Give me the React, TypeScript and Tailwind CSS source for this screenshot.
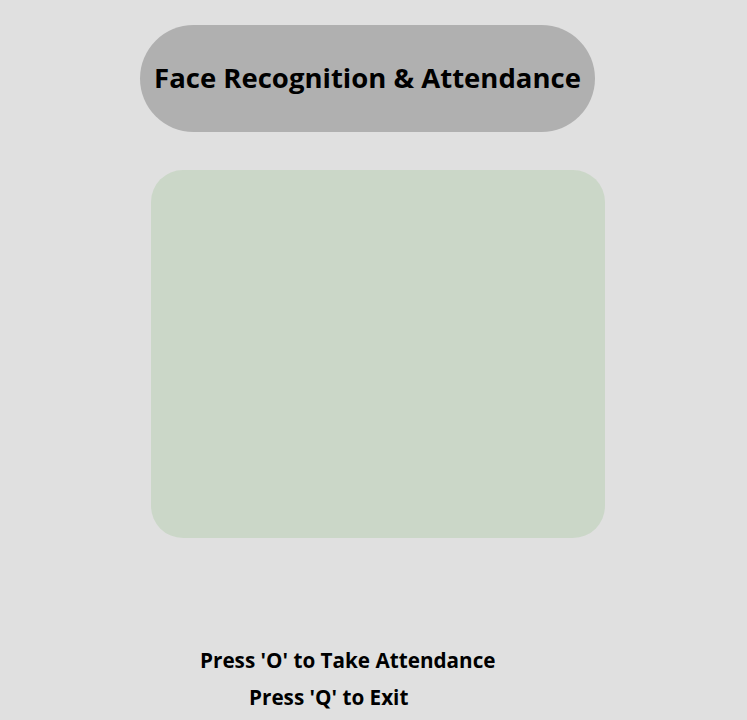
export default function App() {
    return (
        <div className="min-h-[720px] w-full bg-[#e0e0e0] flex flex-col" style={{ fontFamily: '"Open Sans", "Liberation Sans", sans-serif' }}>
            <div className="ml-[140px] mt-[25px] w-[455px] h-[107px] rounded-full bg-[#b0b0b0] flex items-center justify-center">
                <h1 className="text-[27.5px] font-bold text-black leading-none pb-[2px]">Face Recognition &amp; Attendance</h1>
            </div>

            <div className="ml-[151px] mt-[38px] w-[454px] h-[368px] rounded-[32px] bg-[#cbd7c8]" />

            <div className="mt-[104px] flex flex-col text-[20.7px] font-bold text-black leading-[37px]">
                <p className="pl-[200px]">Press 'O' to Take Attendance</p>
                <p className="pl-[249px]">Press 'Q' to Exit</p>
            </div>
        </div>
    )
}
